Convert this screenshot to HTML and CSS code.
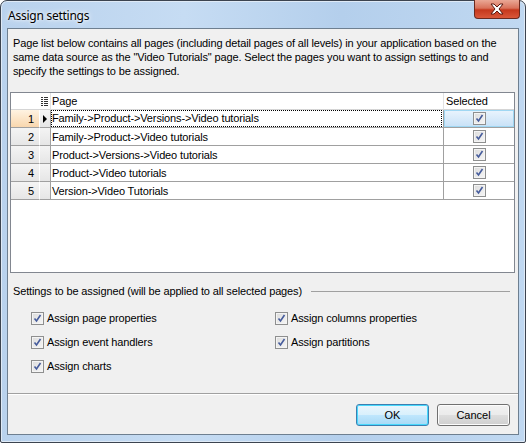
FILE: index.html
```html
<!DOCTYPE html>
<html>
<head>
<meta charset="utf-8">
<link rel="stylesheet" href="styles.css">
</head>
<body>
<div class="window">
  <div class="titlebar">
    <span class="title">Assign settings</span>
    <div class="close">
      <svg width="16" height="12" viewBox="0 0 16 12"><path d="M2 1 L5 1 L8 4 L11 1 L14 1 L10 6 L14 11 L11 11 L8 8 L5 11 L2 11 L6 6 Z" fill="#fff" stroke="#5a1a12" stroke-width="1"/></svg>
    </div>
  </div>
  <div class="client">
    <p class="desc">Page list below contains all pages (including detail pages of all levels) in your application based on the same data source as the "Video Tutorials" page. Select the pages you want to assign settings to and specify the settings to be assigned.</p>
    <div class="grid">
      <div class="hd hd-ind"><svg width="7" height="9" viewBox="0 0 7 9"><path d="M0 0.5h2M0 2.5h2M0 4.5h2M0 6.5h2M0 8.5h2M3 0.5h4M3 2.5h4M3 4.5h4M3 6.5h4M3 8.5h4" stroke="#333" stroke-width="1"/></svg></div>
      <div class="hd hd-page">Page</div>
      <div class="hd hd-sel">Selected</div>

      <div class="num cur">1</div><div class="ind"><span class="tri"></span></div><div class="pg"><span class="focus">Family-&gt;Product-&gt;Versions-&gt;Video tutorials</span></div><div class="sel cur-sel"><span class="cb"></span></div>
      <div class="num">2</div><div class="ind"></div><div class="pg">Family-&gt;Product-&gt;Video tutorials</div><div class="sel"><span class="cb"></span></div>
      <div class="num">3</div><div class="ind"></div><div class="pg">Product-&gt;Versions-&gt;Video tutorials</div><div class="sel"><span class="cb"></span></div>
      <div class="num">4</div><div class="ind"></div><div class="pg">Product-&gt;Video tutorials</div><div class="sel"><span class="cb"></span></div>
      <div class="num">5</div><div class="ind"></div><div class="pg">Version-&gt;Video Tutorials</div><div class="sel"><span class="cb"></span></div>
    </div>
    <div class="group-head"><span>Settings to be assigned (will be applied to all selected pages)</span><span class="rule"></span></div>
    <div class="options">
      <label class="opt"><span class="cb"></span>Assign page properties</label>
      <label class="opt"><span class="cb"></span>Assign columns properties</label>
      <label class="opt"><span class="cb"></span>Assign event handlers</label>
      <label class="opt"><span class="cb"></span>Assign partitions</label>
      <label class="opt"><span class="cb"></span>Assign charts</label>
    </div>
    <div class="footer">
      <button class="btn default">OK</button>
      <button class="btn">Cancel</button>
    </div>
  </div>
</div>
</body>
</html>
```
FILE: styles.css
```css
html, body {
  margin: 0;
  padding: 0;
  background: #ffffff;
}
body {
  width: 526px;
  height: 443px;
  overflow: hidden;
  font-family: "Liberation Sans", Arial, sans-serif;
  font-size: 11px;
  letter-spacing: -0.13px;
  color: #000;
}
.window {
  box-sizing: border-box;
  width: 526px;
  height: 443px;
  border: 1px solid #3c4450;
  border-radius: 7px 7px 2px 2px;
  background: linear-gradient(90deg, #b9d2ed 0%, #c6dcf3 35%, #b4cfec 65%, #c0d8f1 100%);
  box-shadow: inset 0 0 0 1px #dfeaf6;
  padding: 0 6px 7px 6px;
  display: flex;
  flex-direction: column;
}
.titlebar {
  height: 27px;
  display: flex;
  align-items: flex-start;
  justify-content: space-between;
  position: relative;
}
.title {
  font-family: "Noto Sans", "Open Sans", sans-serif;
  font-size: 12px;
  letter-spacing: -0.25px;
  margin: 6px 0 0 1px;
  color: #000;
  text-shadow: 0 0 6px #ffffff, 0 0 3px #ffffff;
}
.close {
  position: absolute;
  right: -1px;
  top: -1px;
  width: 46px;
  height: 19px;
  border: 1px solid #6b2a20;
  border-top: none;
  border-radius: 0 0 4px 4px;
  background: linear-gradient(180deg, #eaa896 0%, #d9725b 45%, #c5381d 55%, #d9573a 100%);
  display: flex;
  align-items: center;
  justify-content: center;
  box-sizing: border-box;
}
.client {
  flex: 1;
  border: 1px solid #6e7f90;
  background: #f0f0f0;
  display: flex;
  flex-direction: column;
}
.desc {
  margin: 7px 4px 0 5px;
  line-height: 14px;
}
.grid {
  margin: 14px 3px 0 2px;
  height: 181px;
  box-sizing: border-box;
  border: 1px solid #828790;
  background: #fff;
  display: grid;
  grid-template-columns: 29px 11px 393px 1fr;
  grid-auto-rows: 18px;
  grid-template-rows: 17px;
  align-content: start;
}
.grid > div {
  box-sizing: border-box;
  border-right: 1px solid #a0a0a0;
  border-bottom: 1px solid #a0a0a0;
  display: flex;
  align-items: center;
  white-space: nowrap;
}
.grid > .hd {
  background: #fff;
  border-bottom-color: #d5d5d5;
  border-right-color: #e2e2e2;
}
.hd-ind {
  grid-column: 1 / span 2;
  justify-content: flex-end;
  padding-right: 2px;
}
.hd-page { padding-left: 1px; }
.hd-sel { padding-left: 2px; border-right: none !important; }
.grid > .num {
  justify-content: flex-end;
  padding-right: 5px;
  background: linear-gradient(180deg, #f4f4f4 0%, #e6e6e6 100%);
  border-right-color: #fff;
}
.grid > .num.cur {
  background: linear-gradient(180deg, #fff3e2 0%, #f9d7ae 100%);
}
.grid > .ind {
  background: linear-gradient(180deg, #f4f4f4 0%, #e6e6e6 100%);
  justify-content: center;
}
.tri {
  width: 0;
  height: 0;
  border-top: 4px solid transparent;
  border-bottom: 4px solid transparent;
  border-left: 4px solid #000;
}
.grid > .pg { padding-left: 1px; }
.focus {
  display: block;
  box-sizing: border-box;
  width: 100%;
  height: 17px;
  line-height: 15px;
  border: 1px dotted #000;
  margin-left: -1px;
  padding-left: 0;
}
.grid > .sel {
  justify-content: center;
  border-right: none;
}
.grid > .sel.cur-sel {
  background: linear-gradient(180deg, #eaf4fd 0%, #c7e1f7 100%);
  box-shadow: inset 0 0 0 1px #9fd7f3;
}
.cb {
  display: inline-block;
  box-sizing: border-box;
  width: 13px;
  height: 13px;
  border: 1px solid #8e8f8f;
  background:
    url("data:image/svg+xml;utf8,<svg xmlns='http://www.w3.org/2000/svg' width='11' height='11'><path d='M2.5 5.5 L4.5 8 L8.5 2' fill='none' stroke='%23465c9c' stroke-width='1.6'/></svg>") center / 11px 11px no-repeat,
    linear-gradient(135deg, #dcdcdc 0%, #f6f6f6 100%);
  box-shadow: inset 0 0 0 1px #f4f4f4;
}
.group-head {
  margin: 10px 8px 0 5px;
  display: flex;
  align-items: center;
  height: 15px;
}
.rule {
  flex: 1;
  margin-left: 9px;
  border-top: 1px solid #a0a0a0;
  margin-top: 1px;
}
.options {
  display: grid;
  grid-template-columns: 244px 1fr;
  grid-auto-rows: 24px;
  margin: 8px 0 0 23px;
}
.opt {
  display: flex;
  align-items: center;
  gap: 3px;
  height: 24px;
}
.footer {
  margin-top: auto;
  border-top: 1px solid #a0a0a0;
  box-shadow: inset 0 1px 0 #ffffff;
  height: 41px;
  display: flex;
  justify-content: flex-end;
  align-items: flex-start;
  padding: 10px 8px 0 0;
  gap: 8px;
  box-sizing: border-box;
}
.btn {
  width: 73px;
  height: 22px;
  font-family: "Liberation Sans", Arial, sans-serif;
  font-size: 11px;
  border: 1px solid #707070;
  border-radius: 3px;
  background: linear-gradient(180deg, #f2f2f2 0%, #ebebeb 48%, #dddddd 52%, #cfcfcf 100%);
  box-shadow: inset 0 0 0 1px #fcfcfc;
  padding: 0;
  color: #000;
}
.btn.default {
  border-color: #3c7fb1;
  box-shadow: inset 0 0 0 1px #48d8fc;
  background: linear-gradient(180deg, #eaf6fd 0%, #d9f0fc 48%, #bee6fd 52%, #a7d9f5 100%);
}
```
